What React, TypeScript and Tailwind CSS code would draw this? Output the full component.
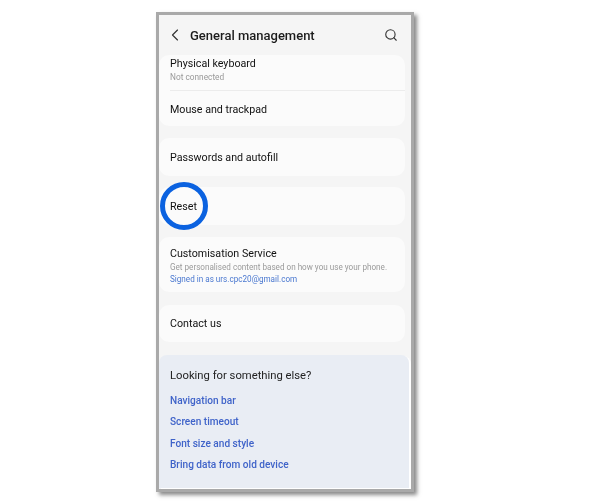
import React from 'react';
import { ChevronLeft, Search } from 'lucide-react';

const LINKS = ['Navigation bar', 'Screen timeout', 'Font size and style', 'Bring data from old device'];

const Card: React.FC<{ className?: string; children: React.ReactNode }> = ({ className = '', children }) => (
  <div className={`mr-[6px] rounded-[10px] bg-[#fbfbfb] pl-[11px] ${className}`}>{children}</div>
);

const Title: React.FC<{ children: React.ReactNode }> = ({ children }) => (
  <p className="text-[10.7px] leading-[14px] text-[#111111]">{children}</p>
);

export default function App() {
  return (
    <div className="h-[503px] w-[600px] overflow-hidden bg-white pl-[156px] pt-[12px] font-['Roboto',sans-serif]">
      <div className="relative h-[480px] w-[258px] border-[3px] border-[#a9a9a9] bg-[#f5f5f5] shadow-[3px_3px_4px_rgba(60,60,60,0.6)] blur-[0.4px]">
        {/* Header */}
        <div className="flex h-[40px] items-center pl-[6px] pr-[13px]">
          <ChevronLeft size={20} strokeWidth={1.4} className="text-[#333333]" />
          <h1 className="ml-[5px] flex-1 pt-[2px] text-[13px] font-medium text-[#1c1c1c]">General management</h1>
          <Search size={14} strokeWidth={1.9} className="text-[#333333]" />
        </div>

        <div className="flex flex-col">
          <Card className="h-[71px]">
            <div className="h-[36px] border-b border-[#ececec] pt-[2px]">
              <Title>Physical keyboard</Title>
              <p className="text-[8.3px] leading-[12px] text-[#999999]">Not connected</p>
            </div>
            <div className="pt-[12px]">
              <Title>Mouse and trackpad</Title>
            </div>
          </Card>
          <Card className="mt-[12px] flex h-[38px] items-center pt-[2px]">
            <Title>Passwords and autofill</Title>
          </Card>
          <Card className="mt-[11px] flex h-[38px] items-center pt-[2px]">
            <Title>Reset</Title>
          </Card>
          <Card className="mt-[12px] h-[55px] pt-[10px]">
            <Title>Customisation Service</Title>
            <p className="text-[8.15px] leading-[12px] text-[#9a9a9a]">Get personalised content based on how you use your phone.</p>
            <p className="text-[8.15px] leading-[12px] text-[#4a78d0]">Signed in as urs.cpc20@gmail.com</p>
          </Card>
          <Card className="mt-[13px] flex h-[37px] items-center">
            <Title>Contact us</Title>
          </Card>

          {/* Suggestions */}
          <div className="mr-[2px] mt-[13px] h-[133px] rounded-t-[8px] bg-[#e9edf4] pl-[11px] pt-[14px] shadow-[2px_1px_0_#ffffff]">
            <p className="text-[11.25px] leading-[14px] text-[#222222]">Looking for something else?</p>
            <div className="mt-[11px] flex flex-col gap-[7.33px]">
              {LINKS.map((l) => (
                <p key={l} className="text-[10.1px] font-medium leading-[14px] text-[#3f63c9]">{l}</p>
              ))}
            </div>
          </div>
        </div>

        {/* Highlight ring */}
        <div className="absolute left-[1px] top-[167px] h-[48px] w-[48px] rounded-full border-[5px] border-[#0b62e0]" />
      </div>
    </div>
  );
}
